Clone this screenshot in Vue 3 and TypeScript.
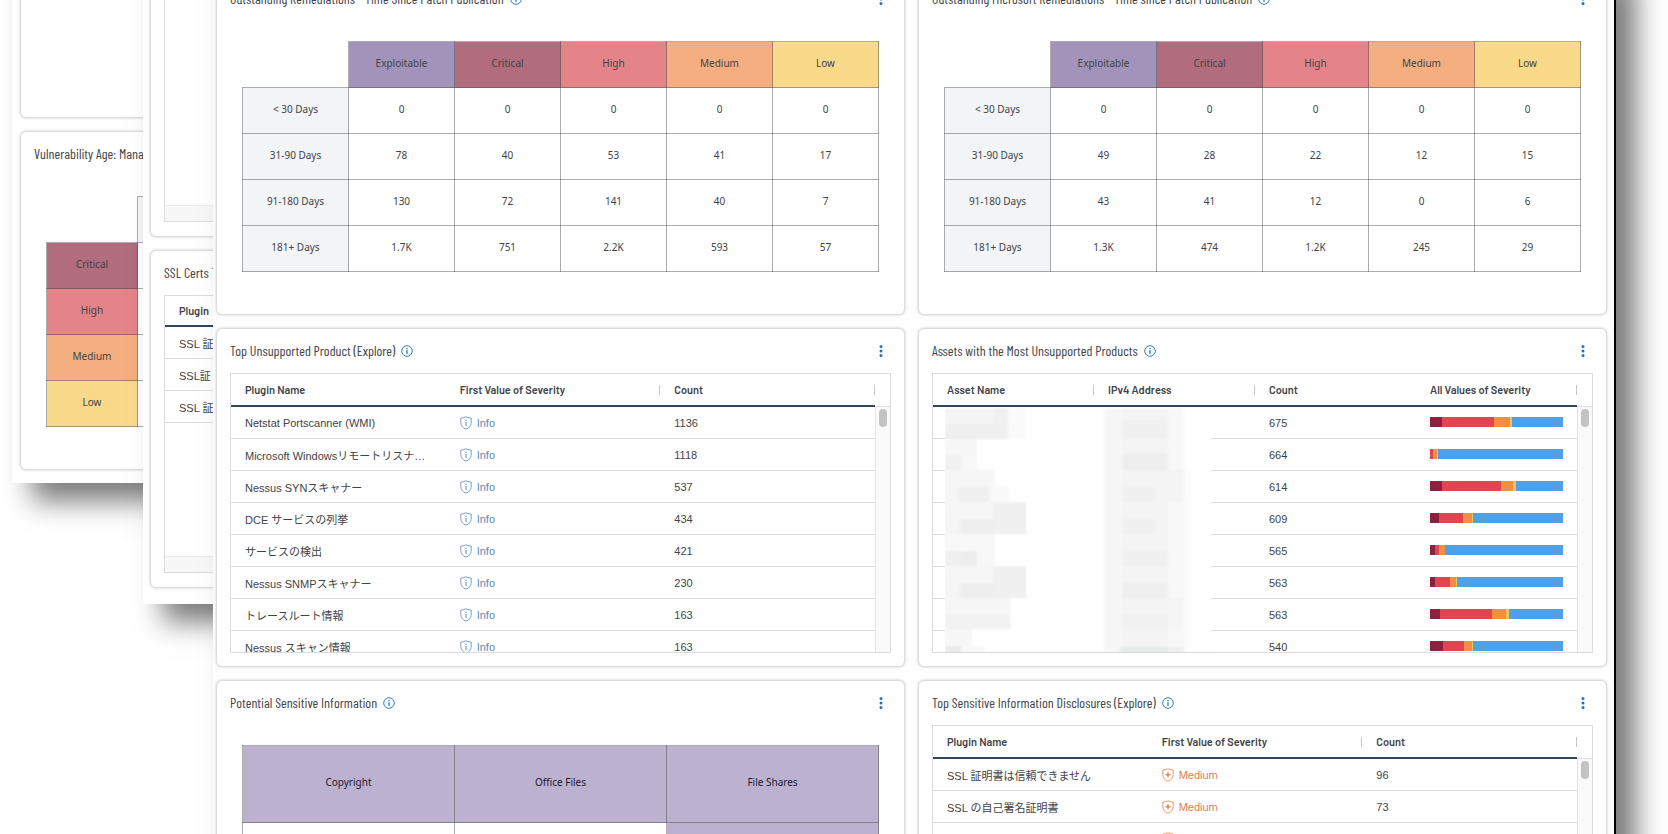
<script setup lang="ts">
type Severity = 'Info' | 'Medium'

interface MatrixPanel {
  kind: 'matrix'
  title: string
  head: { label: string; tone: string }[]
  rows: { label: string; values: string[] }[]
}
interface ListPanel {
  kind: 'list'
  title: string
  rows: { name: string; severity: Severity; count: string }[]
}
interface AssetPanel {
  kind: 'assets'
  title: string
  rows: { count: string; parts: number[] }[]
}
interface TilePanel {
  kind: 'tiles'
  title: string
  tiles: string[]
}
type Panel = MatrixPanel | ListPanel | AssetPanel | TilePanel

const severityHead = [
  { label: 'Exploitable', tone: 'exploitable' },
  { label: 'Critical', tone: 'critical' },
  { label: 'High', tone: 'high' },
  { label: 'Medium', tone: 'medium' },
  { label: 'Low', tone: 'low' },
]

const partTones = ['p-critical', 'p-high', 'p-medium', 'p-low', 'p-info']

const panels: Panel[] = [
  {
    kind: 'matrix',
    title: 'Outstanding Remediations - Time Since Patch Publication',
    head: severityHead,
    rows: [
      { label: '< 30 Days', values: ['0', '0', '0', '0', '0'] },
      { label: '31-90 Days', values: ['78', '40', '53', '41', '17'] },
      { label: '91-180 Days', values: ['130', '72', '141', '40', '7'] },
      { label: '181+ Days', values: ['1.7K', '751', '2.2K', '593', '57'] },
    ],
  },
  {
    kind: 'matrix',
    title: 'Outstanding Microsoft Remediations - Time since Patch Publication',
    head: severityHead,
    rows: [
      { label: '< 30 Days', values: ['0', '0', '0', '0', '0'] },
      { label: '31-90 Days', values: ['49', '28', '22', '12', '15'] },
      { label: '91-180 Days', values: ['43', '41', '12', '0', '6'] },
      { label: '181+ Days', values: ['1.3K', '474', '1.2K', '245', '29'] },
    ],
  },
  {
    kind: 'list',
    title: 'Top Unsupported Product (Explore)',
    rows: [
      { name: 'Netstat Portscanner (WMI)', severity: 'Info', count: '1136' },
      { name: 'Microsoft Windowsリモートリスナ…', severity: 'Info', count: '1118' },
      { name: 'Nessus SYNスキャナー', severity: 'Info', count: '537' },
      { name: 'DCE サービスの列挙', severity: 'Info', count: '434' },
      { name: 'サービスの検出', severity: 'Info', count: '421' },
      { name: 'Nessus SNMPスキャナー', severity: 'Info', count: '230' },
      { name: 'トレースルート情報', severity: 'Info', count: '163' },
      { name: 'Nessus スキャン情報', severity: 'Info', count: '163' },
    ],
  },
  {
    kind: 'assets',
    title: 'Assets with the Most Unsupported Products',
    rows: [
      { count: '675', parts: [37, 155, 46, 5, 153] },
      { count: '664', parts: [0, 9, 12, 3, 372] },
      { count: '614', parts: [37, 175, 36, 9, 139] },
      { count: '609', parts: [28, 71, 25, 4, 268] },
      { count: '565', parts: [16, 12, 17, 1, 350] },
      { count: '563', parts: [16, 45, 16, 2, 317] },
      { count: '563', parts: [30, 156, 41, 7, 162] },
      { count: '540', parts: [39, 63, 22, 4, 268] },
    ],
  },
  {
    kind: 'tiles',
    title: 'Potential Sensitive Information',
    tiles: ['Copyright', 'Office Files', 'File Shares'],
  },
  {
    kind: 'list',
    title: 'Top Sensitive Information Disclosures (Explore)',
    rows: [
      { name: 'SSL 証明書は信頼できません', severity: 'Medium', count: '96' },
      { name: 'SSL の自己署名証明書', severity: 'Medium', count: '73' },
      { name: 'TLS バージョン 1.0 プロトコルの検出', severity: 'Medium', count: '61' },
    ],
  },
]

const ageRows = [
  { label: 'Critical', tone: 'critical' },
  { label: 'High', tone: 'high' },
  { label: 'Medium', tone: 'medium' },
  { label: 'Low', tone: 'low' },
]
const certRows = ['SSL 証', 'SSL証', 'SSL 証']

// Mosaic blocks hiding asset names and addresses: x, y, width, height, shade
const mosaic: [number, number, number, number, string][] = [
  [0, 0, 50, 16, '#f4f4f4'], [50, 0, 13, 16, '#f0f0f0'], [0, 16, 63, 15, '#efefef'], [63, 0, 18, 31, '#fafafa'],
  [0, 31, 32, 16, '#f7f7f7'], [0, 47, 17, 15, '#f1f1f1'], [17, 47, 15, 15, '#f8f8f8'],
  [0, 62, 49, 17, '#f6f6f6'], [0, 79, 13, 15, '#f6f6f6'], [13, 79, 32, 15, '#f0f0f0'], [45, 79, 20, 15, '#f9f9f9'],
  [0, 94, 48, 17, '#f6f6f6'], [48, 94, 33, 32, '#f0f0f0'], [0, 111, 15, 15, '#f5f5f5'], [15, 111, 33, 15, '#eeeeee'],
  [0, 126, 50, 17, '#f8f8f8'], [0, 143, 16, 15, '#efefef'], [16, 143, 16, 15, '#ededed'], [32, 143, 18, 15, '#f8f8f8'],
  [0, 158, 48, 17, '#f6f6f6'], [48, 158, 33, 32, '#f0f0f0'], [0, 175, 15, 15, '#f5f5f5'], [15, 175, 33, 15, '#eeeeee'],
  [0, 190, 65, 17, '#f6f6f6'], [0, 207, 65, 14, '#f2f2f2'],
  [0, 221, 27, 17, '#f7f7f7'], [0, 238, 16, 10, '#eaeaea'], [16, 238, 24, 10, '#f8f8f8'],
  [159, 0, 18, 248, '#f7f7f7'], [177, 0, 46, 248, '#f4f4f4'], [223, 0, 16, 248, '#f8f8f8'], [239, 62, 8, 186, '#fcfcfc'],
  [177, 12, 46, 19, '#f0f0f0'], [177, 45, 46, 17, '#eeeeee'], [177, 79, 34, 15, '#f0f0f0'], [223, 62, 16, 32, '#f4f4f4'],
  [177, 111, 34, 15, '#f0f0f0'], [177, 143, 46, 15, '#f0f0f0'], [177, 174, 46, 16, '#efefef'], [177, 206, 46, 15, '#f1f1f1'],
  [223, 190, 16, 31, '#f5f5f5'], [175, 239, 48, 9, '#e6eae8'], [223, 239, 16, 9, '#eeeeee'],
]
</script>

<template>
  <div class="stage">
    <section class="window back" aria-label="Vulnerability age">
      <article class="card"></article>
      <article class="card">
        <header class="bar"><h2>Vulnerability Age: Managed</h2></header>
        <div class="matrix-wrap">
          <table class="matrix age">
            <thead>
              <tr><td></td><th class="stub" scope="col"></th></tr>
            </thead>
            <tbody>
              <tr v-for="r in ageRows" :key="r.label">
                <th scope="row" :class="r.tone">{{ r.label }}</th>
                <td></td>
              </tr>
            </tbody>
          </table>
        </div>
      </article>
    </section>

    <section class="window middle" aria-label="Certificates">
      <article class="card">
        <header class="bar"></header>
        <div class="box"><div class="strip"></div></div>
      </article>
      <article class="card">
        <header class="bar"><h2>SSL Certs T</h2></header>
        <div class="box">
          <table class="list">
            <thead><tr><th scope="col">Plugin</th></tr></thead>
            <tbody>
              <tr v-for="(c, i) in certRows" :key="i"><td>{{ c }}</td></tr>
            </tbody>
          </table>
          <div class="strip"></div>
        </div>
      </article>
    </section>

    <main class="window front">
      <article v-for="panel in panels" :key="panel.title" class="card">
        <header class="bar">
          <h2>{{ panel.title }}</h2>
          <button class="icon" type="button" :aria-label="'About ' + panel.title">
            <svg width="12" height="12" viewBox="0 0 12 12" fill="none" stroke="#2b7fc9">
              <circle cx="6" cy="6" r="5.3" />
              <path d="M6 5.2v3.6M6 3v1.2" stroke-width="1.4" />
            </svg>
          </button>
          <button class="icon kebab" type="button" :aria-label="'Options for ' + panel.title">
            <svg width="4" height="12" viewBox="0 0 4 12" fill="#2471bd">
              <circle cx="2" cy="1.6" r="1.5" /><circle cx="2" cy="6" r="1.5" /><circle cx="2" cy="10.4" r="1.5" />
            </svg>
          </button>
        </header>

        <div v-if="panel.kind === 'matrix'" class="matrix-wrap">
          <table class="matrix">
            <thead>
              <tr>
                <td></td>
                <th v-for="h in panel.head" :key="h.label" scope="col" :class="h.tone">{{ h.label }}</th>
              </tr>
            </thead>
            <tbody>
              <tr v-for="r in panel.rows" :key="r.label">
                <th scope="row">{{ r.label }}</th>
                <td v-for="(v, i) in r.values" :key="i">{{ v }}</td>
              </tr>
            </tbody>
          </table>
        </div>

        <div v-else-if="panel.kind === 'tiles'" class="matrix-wrap">
          <table class="matrix tiles">
            <thead>
              <tr><th v-for="t in panel.tiles" :key="t" scope="col">{{ t }}</th></tr>
            </thead>
            <tbody>
              <tr><td></td><td></td><td class="filled"></td></tr>
            </tbody>
          </table>
        </div>

        <div v-else class="box scroller">
          <table v-if="panel.kind === 'list'" class="list">
            <thead>
              <tr>
                <th scope="col">Plugin Name</th>
                <th scope="col" class="split">First Value of Severity</th>
                <th scope="col" class="split">Count</th>
              </tr>
            </thead>
            <tbody>
              <tr v-for="r in panel.rows" :key="r.name">
                <td>{{ r.name }}</td>
                <td>
                  <span class="sev" :class="r.severity.toLowerCase()">
                    <svg width="12" height="14" viewBox="0 0 12 14" fill="none" stroke="currentColor">
                      <path d="M6 .8C4.400 1.700 2.600 2 .8 2v4.500c0 3 2 5.400 5.200 6.700 3.200-1.300 5.200-3.700 5.200-6.700V2C9.400 2 7.600 1.700 6 .8z" stroke-width=".8" />
                      <path v-if="r.severity === 'Info'" d="M6 6v4M6 3.800v1.200" stroke="#2b8fd6" />
                      <path v-else d="M6 4.200l.7 1.800 1.800.7-1.800.7L6 9.200l-.7-1.800-1.800-.7 1.800-.7z" fill="currentColor" stroke-width=".5" />
                    </svg>
                    {{ r.severity }}
                  </span>
                </td>
                <td>{{ r.count }}</td>
              </tr>
            </tbody>
          </table>
          <table v-else class="list">
            <thead>
              <tr>
                <th scope="col" class="split">Asset Name</th>
                <th scope="col" class="split">IPv4 Address</th>
                <th scope="col">Count</th>
                <th scope="col" class="split">All Values of Severity</th>
              </tr>
            </thead>
            <tbody>
              <tr v-for="(r, i) in panel.rows" :key="i">
                <td></td>
                <td></td>
                <td>{{ r.count }}</td>
                <td>
                  <div class="stack">
                    <span v-for="(p, j) in r.parts" :key="j" :class="partTones[j]" :style="{ flexGrow: p }"></span>
                  </div>
                </td>
              </tr>
            </tbody>
          </table>
          <div class="gutter"><span class="thumb"></span></div>
          <svg v-if="panel.kind === 'assets'" class="mosaic" viewBox="0 0 266 248" aria-hidden="true">
            <rect width="266" height="248" fill="#fefefe" />
            <g class="haze">
              <rect v-for="(m, i) in mosaic" :key="i" :x="m[0]" :y="m[1]" :width="m[2]" :height="m[3]" :fill="m[4]" />
            </g>
          </svg>
        </div>
      </article>
    </main>
  </div>
</template>

<style>
body {
  margin: 0;
  background: #fff;
}
</style>

<style scoped>
.stage {
  position: relative;
  height: 100vh;
  overflow: hidden;
  font-family: "Liberation Sans", "Noto Sans CJK JP", sans-serif;
  font-size: 11px;
  color: #3f4347;
}
.window {
  position: absolute;
  box-sizing: border-box;
  display: grid;
  gap: 13px;
  background: #fefefe;
  box-shadow: 20px 18px 26px rgba(0, 0, 0, 0.52);
}
.back {
  left: 12px;
  top: -221px;
  width: 50%;
  padding: 0 8px 13px;
}
.middle {
  left: 143px;
  top: -101px;
  width: 50%;
  padding: 0 7px 16px;
}
.front {
  left: 213px;
  right: 52px;
  top: -37px;
  grid-template-columns: minmax(0, 1fr) minmax(0, 1fr);
  padding: 13px 7px 13px 3px;
  border-right: 2px solid #000;
}
.card {
  box-sizing: border-box;
  display: flex;
  flex-direction: column;
  min-height: 339px;
  background: #fff;
  border: 1px solid #dcdcdc;
  border-radius: 6px;
  box-shadow: 0 0 3px #cfcfcf;
}
.middle .card {
  min-height: 338px;
}
.bar {
  display: flex;
  align-items: center;
  height: 44px;
  padding: 0 21px 0 13px;
}
h2 {
  margin: 0;
  font-family: "Barlow Condensed", "Roboto Condensed", "Roboto", sans-serif;
  font-size: 14px;
  font-weight: 400;
  line-height: 20px;
  white-space: nowrap;
}
.icon {
  display: flex;
  margin-left: 6px;
  padding: 0;
  border: 0;
  background: none;
}
.kebab {
  margin-left: auto;
}
.matrix-wrap {
  padding: 20px 25px;
}
.matrix {
  width: 100%;
  table-layout: fixed;
  border-collapse: collapse;
  font-family: "Noto Sans", sans-serif;
  font-size: 10px;
}
.matrix th,
.matrix td {
  box-sizing: border-box;
  height: 46px;
  padding: 0 0 4px;
  border: 1px solid rgba(70, 70, 70, 0.45);
  font-weight: 400;
  text-align: center;
}
.matrix thead td {
  border-top-color: transparent;
  border-left-color: transparent;
}
.matrix tbody th {
  background: #f3f4f6;
}
.matrix .exploitable {
  background: #a293ba;
}
.matrix .critical {
  background: #b16c7e;
}
.matrix .high {
  background: #e58488;
}
.matrix .medium {
  background: #f4ae80;
}
.matrix .low {
  background: #f9d98a;
}
.matrix .stub {
  background: #f6f6f6;
}
.age th:first-child,
.age td:first-child {
  width: 91px;
}
.matrix.tiles th,
.matrix.tiles td {
  height: 77px;
}
.tiles th,
.tiles .filled {
  background: #bcb1ce;
}
.tiles th {
  color: #1d1730;
}
.box {
  position: relative;
  box-sizing: border-box;
  display: flex;
  flex-direction: column;
  height: 280px;
  margin: 0 13px 13px;
  border: 1px solid #dcdcdc;
  overflow: hidden;
}
.middle .box {
  height: 278px;
}
.scroller {
  flex-direction: row;
}
.strip {
  height: 15px;
  margin-top: auto;
  border-top: 1px solid #ececec;
  background: #f7f7f7;
}
.list {
  flex: 1;
  align-self: flex-start;
  width: 100%;
  table-layout: fixed;
  border-collapse: separate;
  border-spacing: 0;
}
.middle .list {
  flex: none;
}
.list th {
  position: relative;
  box-sizing: border-box;
  height: 33px;
  padding: 0 0 0 14px;
  border-bottom: 2px solid #33475b;
  font-family: "Barlow", "Roboto", sans-serif;
  font-size: 11px;
  font-weight: 600;
  text-align: left;
  white-space: nowrap;
}
.middle .list th {
  height: 31px;
}
.split::after {
  content: "";
  position: absolute;
  right: 0;
  top: 11px;
  width: 1px;
  height: 10px;
  background: #c4c4c4;
}
.list td {
  box-sizing: border-box;
  height: 32px;
  padding: 0 0 0 14px;
  border-bottom: 1px solid #dedede;
  overflow: hidden;
  white-space: nowrap;
}
.sev {
  display: flex;
  align-items: center;
  gap: 5px;
}
.info {
  color: #6289b3;
}
.medium.sev {
  color: #e08040;
}
.stack {
  display: flex;
  height: 10px;
  margin: 0 14px 2px 0;
}
.p-critical {
  background: #8f2040;
}
.p-high {
  background: #dc484f;
}
.p-medium {
  background: #ee8f42;
}
.p-low {
  background: #f5c35c;
}
.p-info {
  background: #50a0e8;
}
.gutter {
  box-sizing: border-box;
  display: flex;
  justify-content: center;
  width: 15px;
  margin-top: 32px;
  padding-top: 2px;
  border-top: 1px solid #dedede;
  border-left: 1px solid #e4e4e4;
  background: #fafafa;
}
.thumb {
  width: 8px;
  height: 18px;
  border-radius: 4px;
  background: #c3c3c3;
}
.mosaic {
  position: absolute;
  left: 12px;
  top: 34px;
  width: 266px;
  height: 248px;
}
.haze {
  filter: blur(1px);
}
</style>
